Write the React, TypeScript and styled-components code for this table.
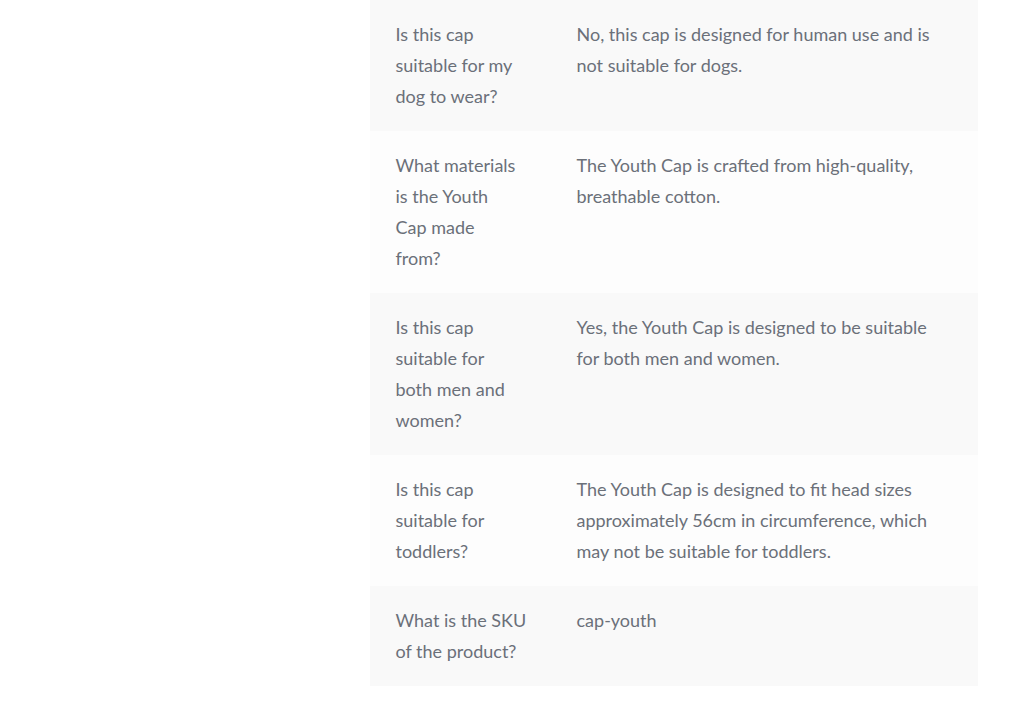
import React from "react";
import styled, { createGlobalStyle } from "styled-components";

const GlobalStyle = createGlobalStyle`
  html, body { margin: 0; padding: 0; background: #ffffff; }
  body { font-family: "Lato", "Noto Sans", sans-serif; }
`;

const Page = styled.div`
  display: grid;
  grid-template-columns: 370px 608px 1fr;
  width: 1024px;
  min-height: 712px;
`;

const Sidebar = styled.aside``;

const Table = styled.table`
  width: 608px;
  border-collapse: collapse;
  border-spacing: 0;
  table-layout: fixed;
  align-self: start;
`;

const Row = styled.tr<{ $even: boolean }>`
  background: ${(p) => (p.$even ? "#fdfdfd" : "#f9f9f9")};
`;

const Question = styled.th`
  width: 130px;
  padding: 19px 25.5px;
  text-align: left;
  vertical-align: top;
  font-weight: 400;
  font-size: 18px;
  line-height: 31px;
  color: #6b7079;
`;

const Answer = styled.td`
  padding: 19px 25.5px;
  text-align: left;
  vertical-align: top;
  font-size: 18px;
  line-height: 31px;
  color: #6b7079;
`;

const Line = styled.span`
  display: block;
  white-space: nowrap;
`;

const faqs = [
  {
    q: ["Is this cap", "suitable for my", "dog to wear?"],
    a: ["No, this cap is designed for human use and is", "not suitable for dogs."],
  },
  {
    q: ["What materials", "is the Youth", "Cap made", "from?"],
    a: ["The Youth Cap is crafted from high-quality,", "breathable cotton."],
  },
  {
    q: ["Is this cap", "suitable for", "both men and", "women?"],
    a: ["Yes, the Youth Cap is designed to be suitable", "for both men and women."],
  },
  {
    q: ["Is this cap", "suitable for", "toddlers?"],
    a: [
      "The Youth Cap is designed to fit head sizes",
      "approximately 56cm in circumference, which",
      "may not be suitable for toddlers.",
    ],
  },
  {
    q: ["What is the SKU", "of the product?"],
    a: ["cap-youth"],
  },
];

export default function App() {
  return (
    <>
      <GlobalStyle />
      <Page>
        <Sidebar />
        <Table>
          <tbody>
            {faqs.map((f, i) => (
              <Row key={i} $even={i % 2 === 1}>
                <Question scope="row">
                  {f.q.map((l, j) => (
                    <Line key={j}>{l}</Line>
                  ))}
                </Question>
                <Answer>
                  {f.a.map((l, j) => (
                    <Line key={j}>{l}</Line>
                  ))}
                </Answer>
              </Row>
            ))}
          </tbody>
        </Table>
      </Page>
    </>
  );
}
